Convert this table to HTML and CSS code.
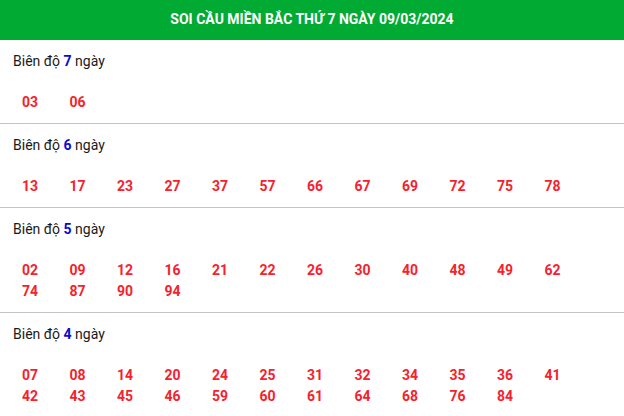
FILE: index.html
```html
<!DOCTYPE html>
<html lang="vi">
<head>
<meta charset="utf-8">
<title>Soi cầu miền Bắc</title>
<link rel="stylesheet" href="styles.css">
</head>
<body>
<div class="box">
  <div class="head">SOI CẦU MIỀN BẮC THỨ 7 NGÀY 09/03/2024</div>
  <div class="sec">
    <div class="lbl">Biên độ <b>7</b> ngày</div>
    <div class="nums"><span>03</span><span>06</span></div>
  </div>
  <div class="sec">
    <div class="lbl">Biên độ <b>6</b> ngày</div>
    <div class="nums"><span>13</span><span>17</span><span>23</span><span>27</span><span>37</span><span>57</span><span>66</span><span>67</span><span>69</span><span>72</span><span>75</span><span>78</span></div>
  </div>
  <div class="sec">
    <div class="lbl">Biên độ <b>5</b> ngày</div>
    <div class="nums"><span>02</span><span>09</span><span>12</span><span>16</span><span>21</span><span>22</span><span>26</span><span>30</span><span>40</span><span>48</span><span>49</span><span>62</span><span>74</span><span>87</span><span>90</span><span>94</span></div>
  </div>
  <div class="sec">
    <div class="lbl">Biên độ <b>4</b> ngày</div>
    <div class="nums"><span>07</span><span>08</span><span>14</span><span>20</span><span>24</span><span>25</span><span>31</span><span>32</span><span>34</span><span>35</span><span>36</span><span>41</span><span>42</span><span>43</span><span>45</span><span>46</span><span>59</span><span>60</span><span>61</span><span>64</span><span>68</span><span>76</span><span>84</span></div>
  </div>
</div>
</body>
</html>
```
FILE: styles.css
```css
html, body {
  margin: 0;
  padding: 0;
  background: #fff;
}
body {
  font-family: Roboto, "Liberation Sans", Arial, sans-serif;
  font-size: 14px;
  color: #222;
}
.box {
  width: 624px;
}
.head {
  background: #00aa33;
  color: #fff;
  font-weight: 700;
  font-size: 14px;
  height: 40px;
  line-height: 38px;
  text-align: center;
}
.sec {
  padding: 10px 0 10px 13px;
  border-bottom: 1px solid #c4c4c4;
}
.lbl {
  line-height: 22px;
  color: #1a1a1a;
}
.lbl b {
  color: #0a0ad0;
  font-weight: 700;
}
.nums {
  margin-top: 20px;
  padding-left: 9px;
  display: grid;
  grid-template-columns: repeat(12, 47.5px);
  line-height: 21px;
}
.nums span {
  color: #f5222d;
  font-weight: 700;
}
```
